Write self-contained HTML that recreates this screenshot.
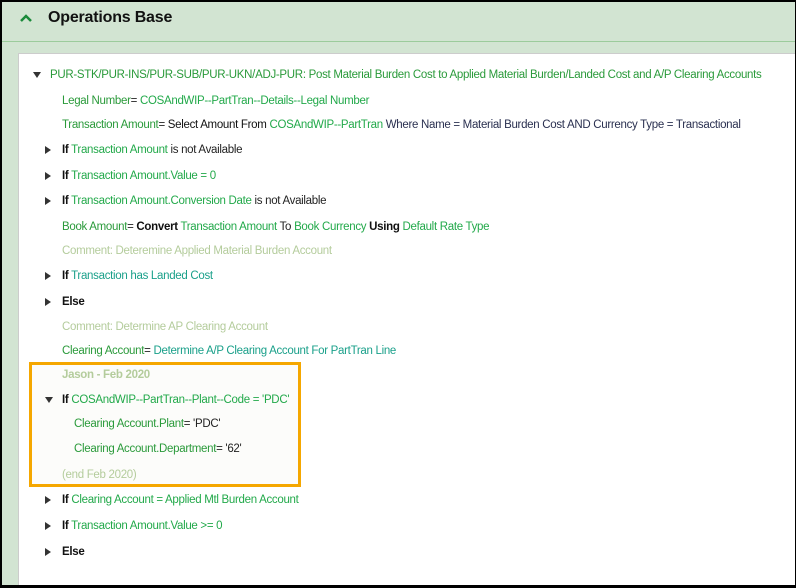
<!DOCTYPE html>
<html><head><style>
*{margin:0;padding:0;box-sizing:border-box}
body{width:796px;height:588px;background:#000;position:relative;overflow:hidden;font-family:"Liberation Sans",sans-serif}
#bg{position:absolute;left:2px;top:2px;width:793px;height:583px;background:#d2e4d2}
#hdr{position:absolute;left:2px;top:2px;width:793px;height:40px;border-bottom:1px solid #9ccb9c}
#hdr .t{position:absolute;left:46px;top:7px;font-size:16px;font-weight:bold;color:#111;letter-spacing:-0.2px}
#hdr svg{position:absolute;left:17px;top:11px}
#panel{position:absolute;left:18px;top:53px;width:777px;height:532px;background:#fff;border-top:1px solid #ccc;border-left:1px solid #ccc}
.r{position:absolute;font-size:11.5px;letter-spacing:-0.3px;white-space:nowrap;color:#222;line-height:14px}
.g{color:#22a94a}.d{color:#2a9a3a}.tl{color:#1aa08a}.c{color:#b4cc9c}.k{color:#111}.b{font-weight:bold;color:#111}.n{color:#2a3050}
.tri{position:absolute;width:0;height:0;border-top:4px solid transparent;border-bottom:4px solid transparent;border-left:6px solid #333}
.down{position:absolute;width:0;height:0;border-left:4px solid transparent;border-right:4px solid transparent;border-top:6px solid #333}
#box{position:absolute;left:29px;top:362px;width:272px;height:125px;border:3px solid #f5a700;background:#fcfcfa}
</style></head><body>
<div id="bg"></div>
<div id="hdr"><svg width="14" height="10" viewBox="0 0 14 10"><path d="M2 8 L7 3 L12 8" stroke="#1a8a3a" stroke-width="2.5" fill="none"/></svg><div class="t">Operations Base</div></div>
<div id="panel"></div>
<div id="box"></div>

<div class="down" style="left:33px;top:72px"></div>
<div class="r d" style="left:50px;top:68px">PUR-STK/PUR-INS/PUR-SUB/PUR-UKN/ADJ-PUR: Post Material Burden Cost to Applied Material Burden/Landed Cost and A/P Clearing Accounts</div>
<div class="r" style="left:62px;top:94px"><span class="d">Legal Number</span>= <span class="g">COSAndWIP--PartTran--Details--Legal Number</span></div>
<div class="r" style="left:62px;top:118px"><span class="d">Transaction Amount</span>= <span class="k">Select Amount From</span> <span class="g">COSAndWIP--PartTran</span> <span class="n">Where Name = Material Burden Cost AND Currency Type = Transactional</span></div>
<div class="tri" style="left:45px;top:146px"></div>
<div class="r" style="left:62px;top:143px"><span class="b">If</span> <span class="g">Transaction Amount</span> is not Available</div>
<div class="tri" style="left:45px;top:172px"></div>
<div class="r" style="left:62px;top:169px"><span class="b">If</span> <span class="g">Transaction Amount.Value = 0</span></div>
<div class="tri" style="left:45px;top:197px"></div>
<div class="r" style="left:62px;top:194px"><span class="b">If</span> <span class="g">Transaction Amount.Conversion Date</span> is not Available</div>
<div class="r" style="left:62px;top:220px"><span class="d">Book Amount</span>= <span class="b">Convert</span> <span class="g">Transaction Amount</span> To <span class="g">Book Currency</span> <span class="b">Using</span> <span class="g">Default Rate Type</span></div>
<div class="r c" style="left:62px;top:244px">Comment: Deteremine Applied Material Burden Account</div>
<div class="tri" style="left:45px;top:272px"></div>
<div class="r" style="left:62px;top:269px"><span class="b">If</span> <span class="tl">Transaction has Landed Cost</span></div>
<div class="tri" style="left:45px;top:298px"></div>
<div class="r b" style="left:62px;top:295px">Else</div>
<div class="r c" style="left:62px;top:320px">Comment: Determine AP Clearing Account</div>
<div class="r" style="left:62px;top:344px"><span class="d">Clearing Account</span>= <span class="tl">Determine A/P Clearing Account For PartTran Line</span></div>
<div class="r c" style="left:62px;top:368px;font-weight:bold">Jason - Feb 2020</div>
<div class="down" style="left:45px;top:397px"></div>
<div class="r" style="left:62px;top:393px"><span class="b">If</span> <span class="g">COSAndWIP--PartTran--Plant--Code = 'PDC'</span></div>
<div class="r" style="left:74px;top:417px"><span class="d">Clearing Account.Plant</span>= 'PDC'</div>
<div class="r" style="left:74px;top:442px"><span class="d">Clearing Account.Department</span>= '62'</div>
<div class="r c" style="left:62px;top:468px">(end Feb 2020)</div>
<div class="tri" style="left:45px;top:496px"></div>
<div class="r" style="left:62px;top:493px"><span class="b">If</span> <span class="g">Clearing Account = Applied Mtl Burden Account</span></div>
<div class="tri" style="left:45px;top:522px"></div>
<div class="r" style="left:62px;top:519px"><span class="b">If</span> <span class="g">Transaction Amount.Value &gt;= 0</span></div>
<div class="tri" style="left:45px;top:548px"></div>
<div class="r b" style="left:62px;top:545px">Else</div>
</body></html>
